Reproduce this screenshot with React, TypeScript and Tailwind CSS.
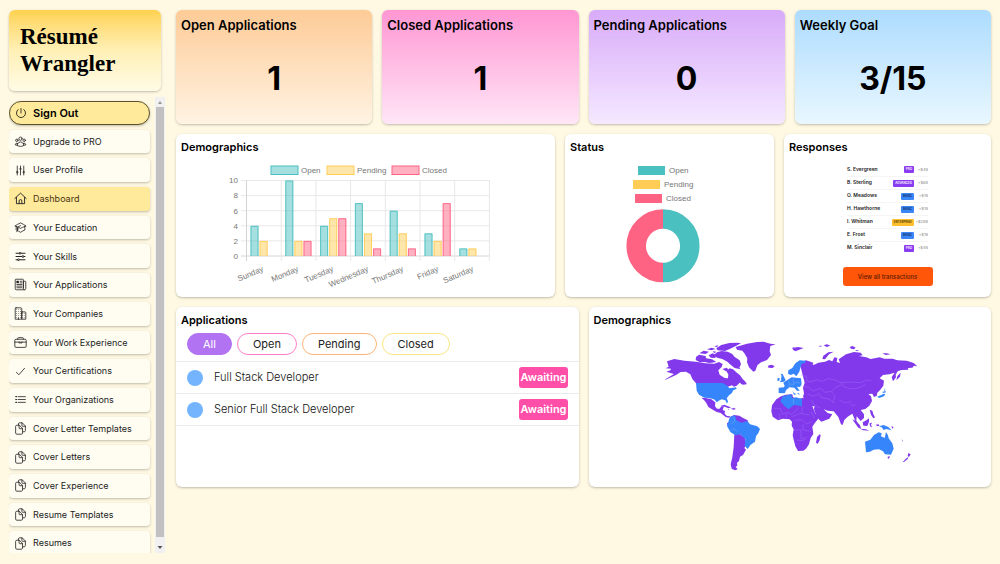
import { useState } from 'react';
import type { ComponentType, ReactNode } from 'react';
import clsx from 'clsx';
import { HiOutlineAcademicCap, HiOutlineAdjustmentsVertical, HiOutlineUserGroup } from 'react-icons/hi2';
import {
  IoBriefcaseOutline,
  IoBusinessOutline,
  IoCheckmarkOutline,
  IoDocumentsOutline,
  IoListOutline,
  IoNewspaperOutline,
  IoPowerOutline,
} from 'react-icons/io5';
import { LiaSlidersHSolid } from 'react-icons/lia';

type NavItem = { label: string; icon: ComponentType<{ className?: string }> };

function HomeIcon({ className }: { className?: string }) {
  return (
    <svg viewBox="0 0 24 24" className={className} fill="none" stroke="currentColor" strokeWidth="1.700" strokeLinecap="round" strokeLinejoin="round">
      <path d="M1.500 12L12 2l10.500 10M4.500 10v11.500h15V10M9.500 21v-4.500a2.500 2.500 0 0 1 5 0V21" />
    </svg>
  );
}

const navItems: NavItem[] = [
  { label: 'Upgrade to PRO', icon: HiOutlineUserGroup },
  { label: 'User Profile', icon: HiOutlineAdjustmentsVertical },
  { label: 'Dashboard', icon: HomeIcon },
  { label: 'Your Education', icon: HiOutlineAcademicCap },
  { label: 'Your Skills', icon: LiaSlidersHSolid },
  { label: 'Your Applications', icon: IoNewspaperOutline },
  { label: 'Your Companies', icon: IoBusinessOutline },
  { label: 'Your Work Experience', icon: IoBriefcaseOutline },
  { label: 'Your Certifications', icon: IoCheckmarkOutline },
  { label: 'Your Organizations', icon: IoListOutline },
  { label: 'Cover Letter Templates', icon: IoDocumentsOutline },
  { label: 'Cover Letters', icon: IoDocumentsOutline },
  { label: 'Cover Experience', icon: IoDocumentsOutline },
  { label: 'Resume Templates', icon: IoDocumentsOutline },
  { label: 'Resumes', icon: IoDocumentsOutline },
];

const stats = [
  { title: 'Open Applications', value: '1', color: 'from-[#fdcb96] to-[#fff3e3]' },
  { title: 'Closed Applications', value: '1', color: 'from-[#ff96d3] to-[#ffe6f7]' },
  { title: 'Pending Applications', value: '0', color: 'from-[#d8abf9] to-[#f5e8ff]' },
  { title: 'Weekly Goal', value: '3/15', color: 'from-[#addcff] to-[#e9f7ff]' },
];

const week = [
  { day: 'Sunday', counts: [4, 2, 0] },
  { day: 'Monday', counts: [10, 2, 2] },
  { day: 'Tuesday', counts: [4, 5, 5] },
  { day: 'Wednesday', counts: [7, 3, 1] },
  { day: 'Thursday', counts: [6, 3, 1] },
  { day: 'Friday', counts: [3, 2, 7] },
  { day: 'Saturday', counts: [1, 1, 0] },
];

const series = [
  { name: 'Open', color: '#4bc0c0', legendX: 45 },
  { name: 'Pending', color: '#ffcd56', legendX: 101 },
  { name: 'Closed', color: '#ff6384', legendX: 166 },
];

const responses = [
  { name: 'S. Evergreen', plan: 'PRO', amount: '+$49' },
  { name: 'B. Sterling', plan: 'ADVANCED', amount: '+$89' },
  { name: 'O. Meadows', plan: 'BASIC', amount: '+$19' },
  { name: 'H. Hawthorne', plan: 'BASIC', amount: '+$19' },
  { name: 'I. Whitman', plan: 'ENTERPRISE', amount: '+$299' },
  { name: 'E. Frost', plan: 'BASIC', amount: '+$19' },
  { name: 'M. Sinclair', plan: 'PRO', amount: '+$49' },
];

const planColors: Record<string, string> = {
  PRO: 'bg-[#8a3df0] text-white',
  ADVANCED: 'bg-[#8a3df0] text-white',
  BASIC: 'bg-[#3b86f7] text-[#0b1f4b]',
  ENTERPRISE: 'bg-[#ffc02e] text-[#3a2600]',
};

const filters = [
  { label: 'All', border: 'border-[#b273f3]' },
  { label: 'Open', border: 'border-[#ff80c8]' },
  { label: 'Pending', border: 'border-[#fdb578]' },
  { label: 'Closed', border: 'border-[#fde580]' },
];

const applications = ['Full Stack Developer', 'Senior Full Stack Developer'];

function Card({ title, children }: { title: string; children: ReactNode }) {
  return (
    <section className="flex min-w-0 flex-col rounded-md bg-white shadow-sm shadow-black/20">
      <h2 className="px-[5px] pt-[5px] text-[11px] leading-4 font-semibold">{title}</h2>
      {children}
    </section>
  );
}

function BarChart() {
  const left = 20;
  const base = 96;
  const step = 35;
  const unit = 7.55;
  return (
    <svg viewBox="0 0 280 130" className="h-[130px] w-[280px]" fontFamily="Liberation Sans, sans-serif" fontSize="8" fill="#777">
      {series.map((s) => (
        <g key={s.name}>
          <rect x={s.legendX} y="6" width="27" height="8.5" fill={s.color} fillOpacity="0.5" stroke={s.color} />
          <text x={s.legendX + 30} y="12.6">{s.name}</text>
        </g>
      ))}
      {[0, 2, 4, 6, 8, 10].map((n) => (
        <g key={n}>
          <path d={`M${left - 5} ${base - n * unit}H264`} stroke={n === 0 ? '#d4d4d4' : '#e8e8e8'} />
          <text x={left - 8} y={base - n * unit + 2.8} textAnchor="end">{n}</text>
        </g>
      ))}
      {[0, 1, 2, 3, 4, 5, 6, 7].map((n) => (
        <path key={n} d={`M${left + 0.5 + n * 34.7} 20.5V101`} stroke={n === 0 ? '#d4d4d4' : '#e8e8e8'} />
      ))}
      {week.map(({ day, counts }, i) => (
        <g key={day}>
          {counts.map((count, j) => {
            const x = left + 4.5 + i * 34.8 + j * 9.1;
            const top = base - count * unit;
            return count > 0 ? (
              <g key={series[j].name}>
                <rect x={x} y={top} width="8" height={base - top} fill={series[j].color} fillOpacity="0.5" />
                <path d={`M${x + 0.5} ${base}V${top + 0.5}H${x + 7.5}V${base}`} fill="none" stroke={series[j].color} strokeOpacity="0.85" />
              </g>
            ) : null;
          })}
          <text textAnchor="end" transform={`translate(${38 + i * step} 111) rotate(-23)`}>{day}</text>
        </g>
      ))}
    </svg>
  );
}

function StatusChart() {
  return (
    <svg viewBox="0 0 80 124" className="h-[124px] w-20" fontFamily="Liberation Sans, sans-serif" fontSize="8" fill="#777">
      <rect x="15" y="6" width="27" height="9" fill="#4bc0c0" />
      <text x="46" y="13">Open</text>
      <rect x="10" y="20" width="27" height="9" fill="#ffcd56" />
      <text x="41" y="27">Pending</text>
      <rect x="12" y="34" width="27" height="9" fill="#ff6384" />
      <text x="43" y="41">Closed</text>
      <g fill="none" strokeWidth="19.5">
        <path d="M40 59a26.8 26.8 0 0 1 0 53.6" stroke="#4bc0c0" />
        <path d="M40 59a26.8 26.8 0 0 0 0 53.6" stroke="#ff6384" />
      </g>
    </svg>
  );
}

function WorldMap() {
  return (
    <svg viewBox="240 105 780 420" className="h-[140px] w-[260px]" strokeLinejoin="round">
      <g fill="#8239ec">
        {/* North America */}
        <path d="M258 184l22-7 30 5 35 3 28 5 27 1 14-5 11 6-3 9-10 10 4 13 15 10 10 1 1-12-6-9 10-9 10 3 9 8 12 10 8 11 9 9-1 6-17-4-9 9-8 3-6-4-21 7-10-5-13-8H345l-11-13-6-14-13-8-16 1-14 9-33 15 1-2 26-16-8-2-15-5 12-4 2-5-16-1 9-5z" />
        <path d="M345 171l9-7 20 4 1 7 18 3 13 8-20 3-16-3-14 1-12-7zM355 160l13-8 16 3-10 7zM383 166l12-6 10 5-2 9-14-1zM378 148l14-5 12 4-14 4zM408 157l14-4 18 2 14 7 6 8 16 11 4 12-5 10 4 5-18-4-14-11-8-8-15-8-16-4-9-8zM408 143l13-8 24-6 24-1 11 2-17 9-17 8-14 6-22-2-4-5zM395 154l11 1-6 5zM424 207l13-4 7 7-9 4zM400 139l12-3-4 6z" />
        <path d="M464 141l34-10 30-5 20-1 20 6 16 2-16 5-2 16 4 11-12 15-18 7-11 9-6 16-6 3-13-13-6-15 1-12-8-14-7-9-16-3z" />
        <path d="M561 197l10-3 10 4-6 6-13-1zM486 244l10 4 1 5-11 1-8-3z" />
        <path d="M361 293l12 1 17 3 13 10-1 12 6 7 8 0 5-7 8 0-4 11 7 3-1 8 7 7 10 1-4 4-10-2-15-12-12-3-14-8-11-7-6-12-7-9z" />
        <path d="M418 318l12-4 15 6 5 4-9 0-14-5zM449 326l10-2 6 3-7 2zM440 326l5 1-2 2z" />
        {/* South America */}
        <path d="M447 351l12-6 16 2 10 6 15 8 2 9-15 3-15-2-12-12zM438 369l8-3-1 11-6-2zM460 401l14-1 17 13 5 21-6 10 5 5-9 16-9 5-3 13-6 5 1 9-5 3 6 8-8 3-10-5-3-13 5-21 4-30z" />
        {/* Africa */}
        <path d="M600 289l14-5 20-1 2 9 17 6 10-4 20 2 4 8 9 19 7 18 16-1-7 16-10 12-8 12 3 22-8 12-5 19-9 13-8 6-16 1-8-14-5-20-3-13 3-18-6-11 1-12-7-7-21-2-14 5-16-11-4-16 2-18 13-18zM708 411l8-8 3 2-3 16-6 10-5-3z" />
        {/* Asia */}
        <path d="M658 197l5-11 12-5 22 7-3 10-10 1 19-6 9-5 20-3 12-5 10 4 6-12 9 2-2 12 10 3-4-11 22-15 24-7 20 2 6 8-11 2 22 4 13 5 27-5 14 4 25 0 14 5 28 1 21 7 11 10-10-2-5 6-13 1 1 5-21 1-11 4-6 10 1 8-9 12-4-13 9-13-16 5-19 2-10 10 13 7-2 15-9 12-9 9-2 10-8 3-5-10-12 1 8 7 3 14-8 14-12 10-14 3 10 13 0 11-10 9-12-14-1 13 7 13-7-3-7-19-5-12-14 9-10 10-5 15-5-2-8-22-14-17-18-2-12-4 12 11 14 4-9 13-24 9-8-7-12-23-2-9 2-7-16 0-14-6-4-3 7-3-3-6-5-11 3-10-3-17 5-15z" />
        <path d="M946 241l3-13 10-10-2 12zM724 177l3-10 15-10 16-2-14 8-12 15zM634 144l17-3 17 3-13 5-12 5-7-5zM711 138l12-1-3 3zM728 136l10-3 10 4-11 4zM806 141l9-3 9 5-5 5-9-2zM822 150l12 1-6 3zM904 160l13 0 12 3-15 2zM634 142l8 1-4 4zM881 272l5 10-3 5-4-9zM866 329l8 3 3 11 5 9-5 3-7-11zM814 358l11 5 12 13 3 10-8-3-12-16zM837 386l18 2 10 4-18-1zM845 367l11-6 8-6 0 10-5 13-12-1zM866 370l7-2-3 6 3 8-4-1-3-7zM884 374l9-1 2 5-7 0zM920 470l7-1-3 7-4-1zM961 418l5 4 0 3zM966 485l10-10 6-4-2 6-12 10zM980 468l2-9 7 4-5 8zM932 378l5 3-1 6-4-5zM779 342l4 6-3 5z" />
      </g>
      <g fill="#3785fb">
        <path d="M345 249h80l14 8 6 8 20-3 2 4-10 5-5 9-8 6-7 9 4 9-3 7-5-10-11-3-10 5-4 4-9-9-15-4-14-1-16-9-7-12z" />
        <path d="M446 352l16-6 4 15 16 7 17-5 8 10 22 6 8 8-5 12-7 10-3 16-13 9-9 13-9-10 2-19-15-15-15 3-15-10-10-18 4-12z" />
        <path d="M622 211l12-7 9-14 13-9 18 1-2 6-10 3-4 13-3 11-9 14-8-8-9 4-8-4zM599 221l6 1 4 8 5 11-5 4-13 2 5-7-1-5 2-7zM590 234l6 0-1 9-6-1zM607 248l13-9 12-7 12 1 16 2 2 18-5 8-9-1 8 13-8-1-8-9-14-1-10 7-5 11-18-1 0-16 16-1 2-5zM634 272l5 7 8 4-8 1zM648 279l6 1 2 6z" />
        <path d="M598 303l7-14 25-6 5 12 10-3 18 5v22l-24-4-16 13-12-9z" />
        <path d="M888 290l13-5 7-4 5 1-4 7-14 5zM904 276l9-3 2 4-9 2zM911 265l2 4-3 8z" />
        <path d="M894 379l14-4 14 6 10 10-16-4-8 3-6-8z" />
        <path d="M852 425l16-6 11-14 14-8 9 3-2 9 11 5 4-18 6 10 2 9 11 15 4 16-8 18-18-1-6-9-12-6-16 1-11 6-12 2z" />
      </g>
      <g fill="none" stroke="#a77cf6" strokeWidth="1.5" strokeOpacity="0.7">
        <path d="M690 245l18-6 14 5 20-8 20 4 18 8 30-2 28 2 20-8 13 2M782 248l6 12 22 7 27-4 15-10M664 258l20 5 12 10 22-8 14 12 20-3 12-12 18-8M712 278l10 15 22 4 16 12M752 276l10 12-6 20M775 300l16 8 20-3M660 225l16 4 2 14 14 4M680 282l14 6 18-4M808 310l8 8 8-4" />
        <path d="M578 325h20l6 18 14-6 14 6 22-20M632 350l26-10 28 5M663 320v18M640 360h24l12 12 16-6M640 390h20v26l18-4M648 420l12 2 14-4M666 372v18l24 4M690 335l10 18M596 340v18M616 340v16M692 300l8 16 18 8" />
      </g>
      <g fill="none" stroke="#76acfc" strokeWidth="1.5">
        <path d="M620 240l6 12 12 2 8-8 12 4M626 252l-4 12M636 236l2 16M637 297v16M458 352l4 12-12 8M446 396l10-10 14 8" />
      </g>
    </svg>
  );
}

function NavLink({ item, active, onSelect }: { item: NavItem; active: boolean; onSelect: () => void }) {
  const Icon = item.icon;
  return (
    <li className="flex">
      <a
        href="#"
        onClick={(e) => {
          e.preventDefault();
          onSelect();
        }}
        className={clsx(
          'flex flex-1 items-center gap-[6px] rounded-[4px] px-[5px] text-[9px] shadow-sm shadow-black/20',
          active ? 'bg-[#feea9a] text-[#4a3210]' : 'bg-[#fffdf2] text-[#222]',
        )}
      >
        <Icon className="size-[13px] text-[#222]" />
        {item.label}
      </a>
    </li>
  );
}

function Sidebar() {
  const [active, setActive] = useState('Dashboard');
  return (
    <aside className="w-[156px] shrink-0">
      <div className="mr-1 h-[81px] rounded-md bg-linear-to-b from-[#ffd24d] via-[#fff0b5] to-[#fffbe6] px-[11px] pt-[13px] shadow-sm shadow-black/20">
        <h1 className="font-['Liberation_Serif',serif] text-[23px] leading-[27px] font-bold">
          Résumé
          <br />
          Wrangler
        </h1>
      </div>
      <div className="mt-[6px] flex h-[456px] justify-between overflow-hidden">
        <nav className="w-[141px] pt-1">
          <ul className="grid h-[454px] auto-rows-fr gap-[5px]">
            <li className="flex">
              <button type="button" className="flex flex-1 items-center gap-[6px] rounded-full border border-[#5c532e] bg-[#feea9a] px-[5px] text-[11px] font-semibold shadow-sm shadow-black/20">
                <IoPowerOutline className="size-3" />
                Sign Out
              </button>
            </li>
            {navItems.map((item) => (
              <NavLink key={item.label} item={item} active={item.label === active} onSelect={() => setActive(item.label)} />
            ))}
          </ul>
        </nav>
        <div aria-hidden="true" className="flex w-[10px] flex-col items-center bg-[#f1f1f1] text-[#555]">
          <svg viewBox="0 0 10 10" className="size-[10px] shrink-0"><path d="M3 7h4L5 4z" fill="#999" /></svg>
          <div className="w-2 flex-1 bg-[#c1c1c1]" />
          <svg viewBox="0 0 10 16" className="h-4 w-[10px] shrink-0"><path d="M2.500 9h5L5 12z" fill="currentColor" /></svg>
        </div>
      </div>
    </aside>
  );
}

function Responses() {
  return (
    <div className="flex flex-col items-center pt-2">
      <table className="w-[81px] text-[5px] leading-[7px]">
        <tbody>
          {responses.map((r) => (
            <tr key={r.name} className="h-[13px] border-b border-[#f5f5f5] last:border-0">
              <td className="p-0 font-semibold text-[#222]">{r.name}</td>
              <td className="p-0 text-right">
                <span className={clsx('inline-block rounded-[1px] px-[2px] text-[3px] font-semibold', planColors[r.plan])}>{r.plan}</span>
              </td>
              <td className="w-[14px] p-0 text-right text-[4px] text-[#888]">{r.amount}</td>
            </tr>
          ))}
        </tbody>
      </table>
      <button type="button" className="mt-[13px] h-[19px] w-[90px] rounded-[3px] bg-[#ff560a] text-[6px] font-medium text-[#5a1a00]">
        View all transactions
      </button>
    </div>
  );
}

function Applications() {
  const [filter, setFilter] = useState('All');
  return (
    <>
      <div className="flex gap-[5px] px-[11px] pt-[5px] pb-[6px]">
        {filters.map((f) => (
          <button
            key={f.label}
            type="button"
            onClick={() => setFilter(f.label)}
            className={clsx(
              'h-[22px] rounded-full border px-[15px] text-[11px]',
              f.border,
              filter === f.label ? 'bg-[#b273f3] text-white' : 'bg-white text-[#222]',
            )}
          >
            {f.label}
          </button>
        ))}
      </div>
      <ul className="border-t border-[#e9eaec]">
        {applications.map((name) => (
          <li key={name} className="flex h-8 items-center border-b border-[#e9eaec] px-[11px] text-[11px] font-light text-[#111]">
            <span className="mr-[11px] size-4 rounded-full bg-[#74b4ff]" />
            {name}
            <span className="ml-auto flex h-[21px] items-center rounded-[3px] bg-[#ff4fa9] px-px font-semibold text-white">Awaiting</span>
          </li>
        ))}
      </ul>
    </>
  );
}

export default function App() {
  return (
    <div className="flex min-h-screen gap-[11px] bg-[#fff9e3] px-[9px] py-[10px] font-[Inter,sans-serif] text-black">
      <Sidebar />
      <main className="flex min-w-0 flex-1 flex-col gap-[10px]">
        <div className="grid grid-cols-4 gap-[10px]">
          {stats.map((s) => (
            <section key={s.title} className={clsx('h-[114px] rounded-md bg-linear-to-b px-[5px] pt-[5px] shadow-sm shadow-black/20', s.color)}>
              <h2 className="text-[13px] leading-5 font-semibold">{s.title}</h2>
              <p className="pt-6 text-center text-[32px] leading-10 font-bold">{s.value}</p>
            </section>
          ))}
        </div>
        <div className="grid min-h-[163px] grid-cols-[379fr_209fr_207fr] gap-[10px]">
          <Card title="Demographics">
            <div className="flex justify-center pt-[5px]">
              <BarChart />
            </div>
          </Card>
          <Card title="Status">
            <div className="flex justify-center pt-[5px] pr-[14px]">
              <StatusChart />
            </div>
          </Card>
          <Card title="Responses">
            <Responses />
          </Card>
        </div>
        <div className="grid min-h-[180px] grid-cols-2 gap-[10px]">
          <Card title="Applications">
            <Applications />
          </Card>
          <Card title="Demographics">
            <div className="flex justify-center pt-[7px] pl-[2px]">
              <WorldMap />
            </div>
          </Card>
        </div>
      </main>
    </div>
  );
}
